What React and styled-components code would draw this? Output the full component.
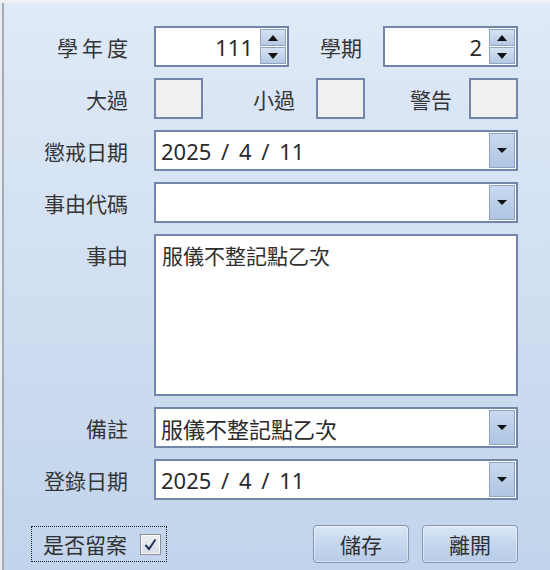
import React from "react";
import styled, { createGlobalStyle } from "styled-components";

const GlobalStyle = createGlobalStyle`
  html, body {
    margin: 0;
    padding: 0;
  }
  body {
    font-family: "Noto Sans", "Noto Sans CJK TC", sans-serif;
  }
`;

const FONT = `"Noto Sans", "Noto Sans CJK TC", sans-serif`;

const Window = styled.div`
  position: relative;
  width: 550px;
  height: 570px;
  box-sizing: border-box;
  border-top: 3px solid #eef1f5;
  background: linear-gradient(180deg, #dfeaf7 0%, #d2e0f2 45%, #c1d4eb 100%);
  box-shadow: inset 2px 0 0 #e9edf2, inset 4px 0 0 #a3abb7;
  padding-top: 23px;
  font-family: ${FONT};
  color: #343434;
`;

const Form = styled.div`
  display: grid;
  grid-template-columns: 128px 364px;
  grid-template-rows: 41px 41px 41px 41px 162px 41px 41px;
  column-gap: 26px;
  row-gap: 11px;
`;

const Label = styled.div`
  display: flex;
  align-items: ${(p) => (p.$top ? "flex-start" : "center")};
  justify-content: flex-end;
  padding-top: ${(p) => (p.$top ? "6px" : "0")};
  padding-right: ${(p) => p.$pr || 0}px;
  font-size: 21px;
  letter-spacing: ${(p) => p.$ls || 0}px;
  margin-right: ${(p) => -(p.$ls || 0)}px;
  color: #353535;
  white-space: nowrap;
`;

const Pair = styled.div`
  display: grid;
  grid-template-columns: ${(p) => p.$cols};
`;

const Field = styled.div`
  display: flex;
  align-items: center;
  box-sizing: border-box;
  height: 100%;
  border: 2px solid #7286a9;
  background: ${(p) => (p.$empty ? "#f0f0f0" : "#fff")};
  padding: 1px;
`;

const Value = styled.div`
  flex: 1;
  font-size: 22px;
  word-spacing: ${(p) => (p.$wide ? "4px" : "0")};
  color: #2b2b2b;
  text-align: ${(p) => (p.$right ? "right" : "left")};
  padding: ${(p) => (p.$right ? "0 7px 0 0" : "0 0 0 4px")};
  white-space: nowrap;
`;

const Spinner = styled.div`
  display: flex;
  flex-direction: column;
  gap: 1px;
  width: 26px;
  height: 100%;
`;

const SpinBtn = styled.div`
  flex: 1;
  display: flex;
  align-items: center;
  justify-content: center;
  box-sizing: border-box;
  border: 1px solid #8fa3c2;
  background: linear-gradient(180deg, #d5e2f2 0%, #b5c9e3 100%);
`;

const DropBtn = styled.div`
  display: flex;
  align-items: center;
  justify-content: center;
  box-sizing: border-box;
  width: 26px;
  height: 100%;
  border: 1px solid #8fa3c2;
  background: linear-gradient(180deg, #c9d9ee 0%, #afc5e2 100%);
`;

const Memo = styled.div`
  box-sizing: border-box;
  height: 100%;
  border: 2px solid #7286a9;
  background: #fff;
  padding: 4px 6px;
  font-size: 21px;
  color: #2f2f2f;
`;

const Footer = styled.div`
  display: flex;
  align-items: center;
  margin-top: 25px;
  padding: 0 32px 0 31px;
`;

const CheckGroup = styled.label`
  display: flex;
  align-items: center;
  gap: 13px;
  box-sizing: border-box;
  width: 136px;
  height: 36px;
  border: 1px dotted #1e1e1e;
  padding-left: 11px;
  font-size: 21px;
  color: #303030;
`;

const CheckBox = styled.span`
  display: flex;
  align-items: center;
  justify-content: center;
  box-sizing: border-box;
  width: 21px;
  height: 21px;
  border: 1px solid #8c9096;
  background: linear-gradient(180deg, #eceef1 0%, #d8dde4 100%);
  box-shadow: inset 0 0 0 1px #f7f8fa;
`;

const Buttons = styled.div`
  display: flex;
  gap: 13px;
  margin-left: auto;
`;

const Button = styled.button`
  width: 96px;
  height: 38px;
  box-sizing: border-box;
  border: 1px solid #8496b6;
  border-radius: 4px;
  background: linear-gradient(180deg, #d9e6f6 0%, #c5d7ee 50%, #b8cce7 100%);
  box-shadow: inset 0 0 0 1px rgba(255, 255, 255, 0.45);
  font-family: ${FONT};
  font-size: 21px;
  color: #303030;
  padding: 0;
`;

const Tri = ({ up }) => (
  <svg width="10" height="6" viewBox="0 0 10 6">
    <polygon points={up ? "5,0 10,6 0,6" : "0,0 10,0 5,6"} fill="#111" />
  </svg>
);

const SmallTri = () => (
  <svg width="10" height="5" viewBox="0 0 10 5">
    <polygon points="0,0 10,0 5,5" fill="#111" />
  </svg>
);

const SpinBox = ({ value }) => (
  <Field>
    <Value $right>{value}</Value>
    <Spinner>
      <SpinBtn>
        <Tri up />
      </SpinBtn>
      <SpinBtn>
        <Tri />
      </SpinBtn>
    </Spinner>
  </Field>
);

const Combo = ({ value, wide }) => (
  <Field>
    <Value $wide={wide}>{value}</Value>
    <DropBtn>
      <SmallTri />
    </DropBtn>
  </Field>
);

const App = () => {
  return (
    <Window>
      <GlobalStyle />
      <Form>
        <Label $ls={4}>學年度</Label>
        <Pair $cols="135px 1fr 135px">
          <SpinBox value="111" />
          <Label $pr={21}>學期</Label>
          <SpinBox value="2" />
        </Pair>

        <Label>大過</Label>
        <Pair $cols="49px 113px 49px 104px 49px">
          <Field $empty />
          <Label $pr={21}>小過</Label>
          <Field $empty />
          <Label $pr={17}>警告</Label>
          <Field $empty />
        </Pair>

        <Label>懲戒日期</Label>
        <Combo value="2025 / 4 / 11" wide />

        <Label>事由代碼</Label>
        <Combo value="" />

        <Label $top>事由</Label>
        <Memo>服儀不整記點乙次</Memo>

        <Label>備註</Label>
        <Combo value="服儀不整記點乙次" />

        <Label>登錄日期</Label>
        <Combo value="2025 / 4 / 11" wide />
      </Form>

      <Footer>
        <CheckGroup>
          是否留案
          <CheckBox>
            <svg width="13" height="13" viewBox="0 0 13 13">
              <path d="M1.5 7 L5 11 L11.5 1.5" fill="none" stroke="#23355c" strokeWidth="2" />
            </svg>
          </CheckBox>
        </CheckGroup>
        <Buttons>
          <Button>儲存</Button>
          <Button>離開</Button>
        </Buttons>
      </Footer>
    </Window>
  );
};

export default App;
